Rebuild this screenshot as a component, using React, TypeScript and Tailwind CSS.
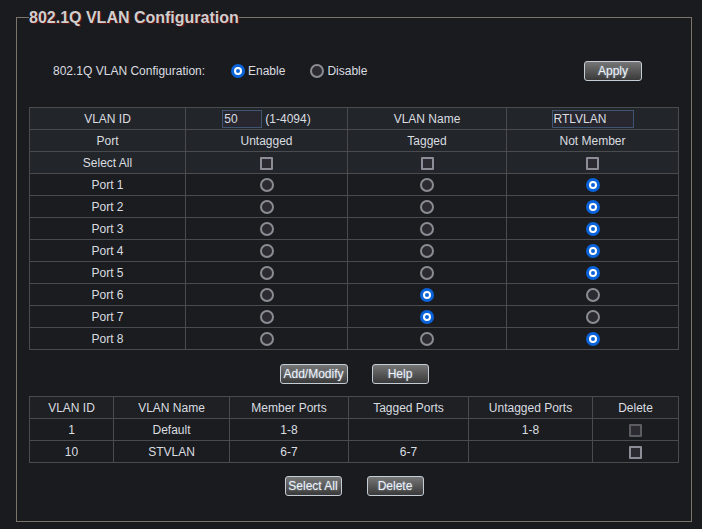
import React from "react"

const font = "font-['Liberation_Sans',Arial,sans-serif]"

function Radio({ checked }: { checked?: boolean }) {
  if (checked) {
    return (
      <span className="inline-flex h-[14px] w-[14px] items-center justify-center rounded-full bg-[#0a63d8] align-middle">
        <span className="h-[8px] w-[8px] rounded-full border-2 border-white bg-[#0a63d8]" />
      </span>
    )
  }
  return (
    <span className="inline-block h-[14px] w-[14px] rounded-full border-2 border-[#8b8b93] bg-[#2c2b31] align-middle" />
  )
}

function Check({ disabled }: { disabled?: boolean }) {
  return (
    <span
      className={
        "inline-block h-[13px] w-[13px] rounded-[1px] border-2 bg-[#2c2b32] align-middle " +
        (disabled ? "border-[#5c5c62]" : "border-[#8d8d97]")
      }
    />
  )
}

function Btn({ label, w }: { label: string; w: string }) {
  return (
    <button
      className={
        "h-[20px] rounded-[3px] border border-[#c4ccd6] bg-gradient-to-b from-[#767676] to-[#3a3a3a] text-[12px] leading-none text-[#eef2f8] [text-shadow:0_0_2px_#9ab] " +
        w
      }
    >
      {label}
    </button>
  )
}

const cell = "border border-[#4a4b4e] text-center align-middle p-0"

// which column is selected for each port: 0 untagged, 1 tagged, 2 not member
const ports = [2, 2, 2, 2, 2, 1, 1, 2]

const vlans = [
  { id: "1", name: "Default", member: "1-8", tagged: "", untagged: "1-8", disabled: true },
  { id: "10", name: "STVLAN", member: "6-7", tagged: "6-7", untagged: "", disabled: false },
]

export default function App() {
  return (
    <div className={"h-[529px] w-[702px] overflow-hidden bg-[#1a1b1e] text-[12px] text-[#dadde0] " + font}>
      <fieldset className="ml-[16px] mt-[8px] h-[514px] w-[676px] border border-[#7a746b] px-[12px] pb-0">
        <legend className="p-0 text-[16px] font-bold leading-[19px] text-[#cfcfcf] [text-shadow:1px_1px_0_#5a1414]">
          802.1Q VLAN Configuration
        </legend>

        {/* Enable / disable */}
        <div className="mt-[34px] flex h-[20px] items-center">
          <span className="ml-[24px] w-[178px]">802.1Q VLAN Configuration:</span>
          <label className="flex items-center gap-[3px]">
            <Radio checked />
            <span>Enable</span>
          </label>
          <label className="ml-[25px] flex items-center gap-[3px]">
            <Radio />
            <span>Disable</span>
          </label>
          <div className="ml-auto mr-[37px]">
            <Btn label="Apply" w="w-[58px]" />
          </div>
        </div>

        {/* Port membership */}
        <table className="mt-[26px] w-[649px] table-fixed border-collapse">
          <colgroup>
            <col className="w-[156px]" />
            <col className="w-[162px]" />
            <col className="w-[159px]" />
            <col className="w-[172px]" />
          </colgroup>
          <tbody>
            <tr className="h-[22px] bg-[#222529]">
              <td className={cell}>VLAN ID</td>
              <td className={cell}>
                <span className="inline-flex items-center">
                  <span className="mr-[3px] flex h-[18px] w-[40px] items-center border border-[#3d5570] bg-[#28272f] pl-[1px] text-left">
                    50
                  </span>
                  (1-4094)
                </span>
              </td>
              <td className={cell}>VLAN Name</td>
              <td className={cell}>
                <span className="mx-auto flex h-[18px] w-[82px] items-center border border-[#3d5570] bg-[#28272f] pl-[1px] text-left">
                  RTLVLAN
                </span>
              </td>
            </tr>
            <tr className="h-[22px] bg-[#222529]">
              <td className={cell}>Port</td>
              <td className={cell}>Untagged</td>
              <td className={cell}>Tagged</td>
              <td className={cell}>Not Member</td>
            </tr>
            <tr className="h-[22px] bg-[#222529]">
              <td className={cell}>Select All</td>
              <td className={cell}><Check /></td>
              <td className={cell}><Check /></td>
              <td className={cell}><Check /></td>
            </tr>
            {ports.map((sel, i) => (
              <tr key={i} className="h-[22px] bg-[#1b1c1f]">
                <td className={cell}>Port {i + 1}</td>
                {[0, 1, 2].map((c) => (
                  <td key={c} className={cell}>
                    <Radio checked={sel === c} />
                  </td>
                ))}
              </tr>
            ))}
          </tbody>
        </table>

        <div className="mt-[14px] flex justify-center gap-[24px]">
          <Btn label="Add/Modify" w="w-[68px]" />
          <Btn label="Help" w="w-[57px]" />
        </div>

        {/* VLAN list */}
        <table className="mt-[12px] w-[649px] table-fixed border-collapse">
          <colgroup>
            <col className="w-[84px]" />
            <col className="w-[116px]" />
            <col className="w-[119px]" />
            <col className="w-[120px]" />
            <col className="w-[124px]" />
            <col className="w-[86px]" />
          </colgroup>
          <tbody>
            <tr className="h-[22px] bg-[#1e2023]">
              <td className={cell}>VLAN ID</td>
              <td className={cell}>VLAN Name</td>
              <td className={cell}>Member Ports</td>
              <td className={cell}>Tagged Ports</td>
              <td className={cell}>Untagged Ports</td>
              <td className={cell}>Delete</td>
            </tr>
            {vlans.map((v) => (
              <tr key={v.id} className="h-[22px] bg-[#1b1c1f]">
                <td className={cell}>{v.id}</td>
                <td className={cell}>{v.name}</td>
                <td className={cell}>{v.member}</td>
                <td className={cell}>{v.tagged}</td>
                <td className={cell}>{v.untagged}</td>
                <td className={cell}><Check disabled={v.disabled} /></td>
              </tr>
            ))}
          </tbody>
        </table>

        <div className="mt-[13px] flex justify-center gap-[25px]">
          <Btn label="Select All" w="w-[57px]" />
          <Btn label="Delete" w="w-[57px]" />
        </div>
      </fieldset>
    </div>
  )
}
